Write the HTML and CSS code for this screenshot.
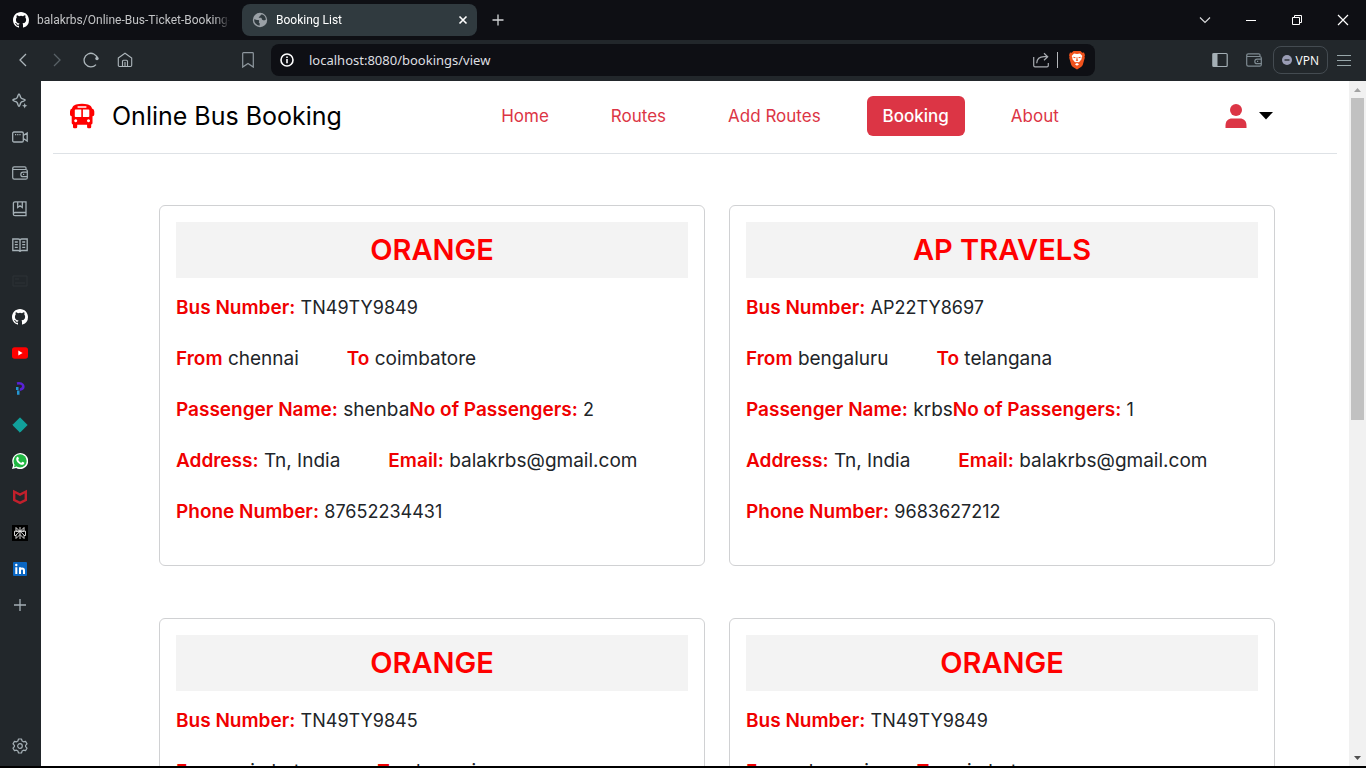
FILE: index.html
```html
<!DOCTYPE html>
<html lang="en">
<head>
<meta charset="utf-8">
<meta name="viewport" content="width=device-width, initial-scale=1">
<title>Booking List</title>
<link rel="stylesheet" href="styles.css">
</head>
<body>
<svg class="defs" aria-hidden="true">
  <symbol id="github" viewBox="0 0 16 16"><path fill="currentColor" d="M8 0C3.58 0 0 3.58 0 8c0 3.54 2.29 6.53 5.47 7.59.4.07.55-.17.55-.38 0-.19-.01-.82-.01-1.49-2.01.37-2.53-.49-2.69-.94-.09-.23-.48-.94-.82-1.13-.28-.15-.68-.52-.01-.53.63-.01 1.08.58 1.23.82.72 1.21 1.87.87 2.33.66.07-.52.28-.87.51-1.07-1.78-.2-3.64-.89-3.64-3.95 0-.87.31-1.59.82-2.15-.08-.2-.36-1.02.08-2.12 0 0 .67-.21 2.2.82a7.4 7.4 0 0 1 4 0c1.53-1.04 2.2-.82 2.2-.82.44 1.1.16 1.92.08 2.12.51.56.82 1.27.82 2.15 0 3.07-1.87 3.75-3.65 3.95.29.25.54.73.54 1.48 0 1.07-.01 1.93-.01 2.2 0 .21.15.46.55.38A8.01 8.01 0 0 0 16 8c0-4.42-3.58-8-8-8z"/></symbol>
  <symbol id="wallet" viewBox="0 0 16 16"><g fill="none" stroke="currentColor" stroke-width="1.2"><path d="M14 4.5V3.2c0-.8-.5-1.4-1.3-1.4H2.2c-.9 0-1.5.6-1.5 1.4v9.3c0 1 .6 1.7 1.6 1.7h11.4c.9 0 1.6-.6 1.6-1.5V6c0-.9-.6-1.5-1.5-1.5H2.2C1.2 4.5.7 4 .7 3.2"/><path d="M15.3 7.1h-4.2a2.3 2.3 0 0 0 0 4.6h4.2M11 9.4h1.2"/></g></symbol>
</svg>

<header class="tab-strip">
  <div class="tab">
    <svg class="icon" aria-hidden="true"><use href="#github"/></svg>
    <span class="tab-title">balakrbs/Online-Bus-Ticket-Booking-</span>
  </div>
  <div class="tab tab-active">
    <svg class="icon globe" viewBox="0 0 16 16" aria-hidden="true"><circle cx="8" cy="8" r="7.2" fill="#9aa0a6"/><path fill="#303a3f" d="M2.2 7.2c1.5.2 2.5.9 3.6.8 1.4 0 1.7 1 1.2 1.7-.5.6 0 1.1.6 1.5.5.5-.2 1.7 0 2.5A5.9 5.9 0 0 1 2.2 7.2zM9.4 2.2c.3.6-.2 1.2-.9 1.3-.6.2-.4 1-1.2 1.2-.7.2-.7.8-.2 1 .8.4 2-.2 2.5.5.4.7.2 1.6 1.1 1.7.8.1 1.2.8 1.8.4.5-.3.9-.6 1.4-.4a6 6 0 0 0-4.5-5.7z"/></svg>
    <span class="tab-title">Booking List</span>
    <button class="plain" aria-label="Close tab"><svg width="10" height="10" viewBox="0 0 10 10"><path d="M1.5 1.5l7 7m0-7l-7 7" stroke="#fff" stroke-width="1.6"/></svg></button>
  </div>
  <button class="plain new-tab" aria-label="New tab"><svg width="12" height="12" viewBox="0 0 12 12"><path d="M6 .5v11M.5 6h11" stroke="#d2d4d6" stroke-width="1.3"/></svg></button>
  <div class="window-buttons">
    <button class="plain" aria-label="Search tabs"><svg width="12" height="12" viewBox="0 0 12 12"><path d="M1 3.500l5 5 5-5" fill="none" stroke="#d8d9db" stroke-width="1.2"/></svg></button>
    <button class="plain" aria-label="Minimize"><svg width="12" height="12" viewBox="0 0 12 12"><path d="M1 6.500h10" stroke="#fff"/></svg></button>
    <button class="plain" aria-label="Restore"><svg width="12" height="12" viewBox="0 0 12 12"><path d="M1.500 3.500h7v7h-7zM3.500 3.500v-2h7v7h-2" fill="none" stroke="#fff"/></svg></button>
    <button class="plain" aria-label="Close"><svg width="12" height="12" viewBox="0 0 12 12"><path d="M1 1l10 10M11 1L1 11" stroke="#fff" stroke-width="1.2"/></svg></button>
  </div>
</header>

<div class="toolbar">
  <div class="nav-buttons">
    <button class="plain" aria-label="Back"><svg class="icon" viewBox="0 0 16 16"><path d="M11 2L5 8l6 6" fill="none" stroke="#adb6bb" stroke-width="1.3"/></svg></button>
    <button class="plain" aria-label="Forward"><svg class="icon" viewBox="0 0 16 16"><path d="M5 2l6 6-6 6" fill="none" stroke="#596167" stroke-width="1.3"/></svg></button>
    <button class="plain" aria-label="Reload"><svg class="icon" viewBox="0 0 16 16"><path d="M14.500 6.500A6.800 6.800 0 1 0 13 12.600" fill="none" stroke="#adb6bb" stroke-width="1.3"/><circle cx="14" cy="6.500" r="1.700" fill="#adb6bb"/></svg></button>
    <button class="plain" aria-label="Home"><svg class="icon" viewBox="0 0 16 16"><path d="M1.300 6L8 1.200 14.700 6v7.300c0 .7-.5 1.200-1.200 1.200h-11c-.7 0-1.200-.5-1.200-1.200zM5.500 14.500V9.200c0-.6.4-1 1-1h3c.6 0 1 .4 1 1v5.300M8 10v4" fill="none" stroke="#adb6bb" stroke-width="1.100"/></svg></button>
  </div>
  <button class="plain bookmark" aria-label="Bookmark"><svg class="icon" viewBox="0 0 16 16"><path d="M2.700 1.500c0-.5.3-.8.800-.8h9c.5 0 .8.300.8.800v13.600L8 11.400l-5.300 3.700z" fill="none" stroke="#8e979e" stroke-width="1.200"/></svg></button>
  <div class="address">
    <svg class="icon" viewBox="0 0 16 16" aria-hidden="true"><circle cx="8" cy="8" r="6" fill="none" stroke="#fff" stroke-width="1.600"/><path d="M8 7v4.200M8 4.600v1.500" stroke="#fff" stroke-width="1.600"/></svg>
    <input aria-label="Address" type="text" value="localhost:8080/bookings/view" spellcheck="false">
    <button class="plain" aria-label="Share"><svg class="icon" viewBox="0 0 16 16"><path d="M.7 5v8.500c0 .8.500 1.300 1.300 1.300h12c.8 0 1.300-.5 1.300-1.300V11M3.700 11.300c.2-4.500 3-6.600 7.500-6.600h3M11 1.200l3.700 3.500L11 8.200" fill="none" stroke="#a8abb0" stroke-width="1.200"/></svg></button>
    <span class="divider"></span>
    <button class="plain shields" aria-label="Brave Shields"><svg width="18" height="20" viewBox="0 0 18 20"><path fill="#f0521c" d="M5.500 1h7l1.800 1.700 1.700-.1 1 2.700-.5 1 .3 1.400-2 7c-.3 1-1 1.700-1.800 2.200L9 19.500l-4-2.600c-.8-.5-1.500-1.200-1.800-2.200l-2-7 .3-1.400-.5-1L2 2.600l1.700.1z"/><path fill="#fff" d="M9 4l3-.6 2.300 2.700-.8 2 .2 1-2.500 3-1 .1L9 12l-1.200.2-1-.1-2.500-3 .2-1-.8-2L6 3.400zM9 13l2.100 1.200L9 15.800l-2.100-1.600z"/><path fill="#f0521c" d="M5.200 6.700l2.500.6-.6 1-1.600-.6zM12.800 6.700l-2.500.6.6 1 1.600-.6zM8.700 7h.6l.3 2.400.7 1-1.300.7-1.300-.7.700-1z"/></svg></button>
  </div>
  <div class="tools">
    <button class="plain" aria-label="Sidebar"><svg class="icon" viewBox="0 0 16 16"><rect x=".8" y="1.500" width="14.400" height="13" rx="1" fill="none" stroke="#a4afb5" stroke-width="1.200"/><path d="M1 2h4.500v12H1z" fill="#a4afb5"/></svg></button>
    <button class="plain wallet" aria-label="Wallet"><svg class="icon"><use href="#wallet"/></svg></button>
    <button class="vpn"><svg width="10" height="10" viewBox="0 0 10 10"><circle cx="5" cy="5" r="5" fill="#9a9db5"/><path d="M2.500 5h5" stroke="#22272b" stroke-width="1.300"/></svg>VPN</button>
    <button class="plain" aria-label="Menu"><svg class="icon" viewBox="0 0 16 16"><path d="M1 3.500h14M1 8.500h14M1 13.500h14" stroke="#98a7aa" stroke-width="1.100"/></svg></button>
  </div>
</div>

<div class="workspace">
  <aside class="sidebar">
    <button class="plain" aria-label="Leo AI"><svg class="icon" viewBox="0 0 16 16"><g fill="none" stroke="currentColor" stroke-width="1.400"><path d="M7 1c.7 0 1 1.600 1.600 3.200.3.700.7 1.100 1.400 1.400 1.600.7 3.200.8 3.200 1.500s-1.600 1-3.200 1.600c-.7.300-1.100.700-1.400 1.400C8 11.700 7.700 13.300 7 13.300s-1-1.600-1.600-3.200C5.100 9.400 4.700 9 4 8.700 2.400 8.100.8 7.800.8 7.100S2.400 6.200 4 5.600c.7-.3 1.100-.7 1.400-1.400C6 2.600 6.300 1 7 1z"/></g><path fill="currentColor" d="M12.700 10l.8 1.900 1.900.8-1.900.8-.8 1.900-.8-1.900-1.900-.8 1.900-.8z"/></svg></button>
    <button class="plain" aria-label="Talk"><svg class="icon" viewBox="0 0 16 16"><path d="M2 3h8c.8 0 1.300.5 1.300 1.300v7.400c0 .8-.5 1.300-1.300 1.300H2c-.8 0-1.300-.5-1.300-1.300V4.300C.7 3.500 1.200 3 2 3zM11.300 6.500l3.900-2.600v8.200l-3.900-2.600M3 5.700h1.200m1 0h1.200m1 0h1.200" fill="none" stroke="currentColor" stroke-width="1.300"/></svg></button>
    <button class="plain" aria-label="Wallet"><svg class="icon"><use href="#wallet"/></svg></button>
    <button class="plain" aria-label="Bookmarks"><svg class="icon" viewBox="0 0 16 16"><path d="M14 11.500H3c-1 0-1.600.600-1.600 1.700 0 1 .6 1.500 1.600 1.500h11V.8H3C2 .8 1.400 1.400 1.400 2.300v11M5.700 1v5.500L8 4.800l2.300 1.700V1" fill="none" stroke="currentColor" stroke-width="1.300"/></svg></button>
    <button class="plain" aria-label="Reading list"><svg class="icon" viewBox="0 0 16 16"><path d="M.8 2h5.500C7.400 2 8 2.600 8 3.400 8 2.600 8.600 2 9.700 2h5.500v11.500H9.700c-1 0-1.700.4-1.700 1.200 0-.8-.7-1.200-1.700-1.200H.8zM8 3.400v11.500M2.800 5h3M2.800 7.700h3M2.800 10.400h3M10.200 5h3M10.200 7.700h3M10.200 10.400h3" fill="none" stroke="currentColor" stroke-width="1.300"/></svg></button>
    <button class="plain faint" aria-label="Playlist"><svg class="icon" viewBox="0 0 16 16"><path d="M1 3h14v10H1zM3 6h4M3 10h10" fill="none" stroke="currentColor"/></svg></button>
    <button class="plain white" aria-label="GitHub"><svg class="icon"><use href="#github"/></svg></button>
    <button class="plain" aria-label="YouTube"><svg class="icon" viewBox="0 0 16 16"><rect y="2.300" width="16" height="11.400" rx="2.700" fill="#f00"/><path d="M6.300 5.500v5l4.300-2.500z" fill="#fff"/></svg></button>
    <button class="plain" aria-label="Pixlr"><svg class="icon" viewBox="0 0 16 16"><path d="M5 2.500c3-.7 6 .2 6.300 2.700.2 2-1.500 3.200-3.500 3.500" fill="none" stroke="#5a22d6" stroke-width="2.600"/><path d="M4 6h2.500v3H4zM5 9.500h2.500v4.200H5z" fill="#2497d3"/></svg></button>
    <button class="plain" aria-label="Diamond"><svg class="icon" viewBox="0 0 16 16"><path d="M8 .8L15.200 8 8 15.200.8 8z" fill="#11a09b" stroke="#11a09b" stroke-linejoin="round"/></svg></button>
    <button class="plain" aria-label="WhatsApp"><svg class="icon" viewBox="0 0 16 16"><path fill="#fff" d="M0 16l1.200-4.100A8 8 0 1 1 4.200 15z"/><circle cx="8.100" cy="7.900" r="6.600" fill="#20b642"/><path d="M2 14.300l.8-3 2 2.300z" fill="#20b642"/><path fill="#fff" d="M5.200 4c.8-.4 1.100 0 1.700 1.600.1.500-.6.900-.7 1.300.8 1.500 1.800 2.400 3.200 2.900.4-.1.800-1.100 1.200-1 .5.200 1.700.8 1.700.9.200.8-.5 1.800-1.600 2-3.200.4-6.500-3.300-6.500-5.500 0-1 .5-1.800 1-2.200z"/></svg></button>
    <button class="plain" aria-label="McAfee"><svg class="icon" viewBox="0 0 16 16"><path fill="#c2202c" d="M1 .8l7 3.500 7-3.500v11L8 15.300l-7-3.500zM3.400 4.600v5.700L8 12.600l4.600-2.300V4.600L8 7z"/></svg></button>
    <button class="plain" aria-label="Perplexity"><svg class="icon" viewBox="0 0 16 16"><path d="M0 0h16v16H0z" fill="#000"/><path d="M8 2v12M4 2.500l4 4 4-4v3.700H4zM8 6.300L4 10v3.500l4-4 4 4V10L8 6.300M4 10.500H2.500V6.200h11v4.300H12" fill="none" stroke="#e6e6e6" stroke-width=".9"/></svg></button>
    <button class="plain" aria-label="LinkedIn"><svg class="icon" viewBox="0 0 16 16"><rect x="1" y="1" width="14" height="14" rx="1" fill="#0a66c2"/><path d="M4.300 6.300V13M8 13V6.300M8 9.500c0-2.700 4-2.700 4 0V13" fill="none" stroke="#fff" stroke-width="2"/><circle cx="4.300" cy="4" r="1.200" fill="#fff"/></svg></button>
    <button class="plain" aria-label="Add"><svg class="icon" viewBox="0 0 16 16"><path d="M8 2v12M2 8h12" stroke="currentColor" stroke-width="1.300"/></svg></button>
    <button class="plain settings" aria-label="Settings"><svg class="icon" viewBox="0 0 16 16"><path d="M6.500 1h3l.6 2 1.400.8 2-.5L15 5.900l-1.400 1.500v1.200L15 10.100l-1.500 2.600-2-.5-1.400.8-.6 2h-3l-.6-2-1.400-.8-2 .5L1 10.100l1.400-1.500V7.400L1 5.900l1.500-2.600 2 .5L5.900 3z" fill="none" stroke="currentColor" stroke-width="1.200" stroke-linejoin="round"/><circle cx="8" cy="8" r="2.300" fill="none" stroke="currentColor" stroke-width="1.200"/></svg></button>
  </aside>

  <main class="page">
    <nav class="site-nav">
      <a class="brand" href="#">
        <svg width="26" height="26" viewBox="0 0 26 26" aria-hidden="true"><path fill="#f00" fill-rule="evenodd" d="M7 1.500Q13 0 19 1.500Q22.500 2.500 23 5.500Q25.300 6 25.300 8.500v3q0 1.500-1.800 1.800V20q0 1.300-1.300 1.600V24q0 1.200-1.200 1.200h-1.700q-1.200 0-1.200-1.200v-2.300H8.200V24q0 1.200-1.200 1.200H5.200Q4 25.200 4 24v-2.400Q2.700 21.300 2.700 20v-6.700Q1 13 1 11.500v-3Q1 6 3 5.500Q3.500 2.500 7 1.500zM8.600 3.300v1.400h8.800V3.300zM6.500 6.500Q5.800 6.500 5.800 7.200v6q0 .8.700.8h5.800V6.500zM13.900 6.500V14h5.600q.8 0 .8-.8v-6q0-.7-.8-.7zM6.700 16.300a1.500 1.500 0 1 0 .01 0zM19.500 16.300a1.500 1.500 0 1 0 .01 0z"/></svg>
        Online Bus Booking
      </a>
      <ul class="links">
        <li><a href="#">Home</a></li>
        <li><a href="#">Routes</a></li>
        <li><a href="#">Add Routes</a></li>
        <li><a class="active" href="#" aria-current="page">Booking</a></li>
        <li><a href="#">About</a></li>
      </ul>
      <button class="plain account" aria-label="Account">
        <svg width="22" height="26" viewBox="0 0 22 26"><circle cx="11" cy="7" r="6" fill="#dc3545"/><path d="M.5 25v-2.500c0-4.500 3-7 6.500-7h8c3.500 0 6.500 2.500 6.500 7V25z" fill="#dc3545"/></svg>
        <svg width="14" height="8" viewBox="0 0 14 8"><path d="M0 0h14L7 7.500z"/></svg>
      </button>
    </nav>

    <div class="bookings">
      <article class="card">
        <h2>ORANGE</h2>
        <p><span><b>Bus Number:</b> <span class="number">TN49TY9849</span></span></p>
        <p><span><b>From</b> chennai</span><span><b>To</b> coimbatore</span></p>
        <p class="joined"><span><b>Passenger Name:</b> shenba</span><span><b>No of Passengers:</b> <span class="number">2</span></span></p>
        <p><span><b>Address:</b> Tn, India</span><span><b>Email:</b> balakrbs@gmail.com</span></p>
        <p><span><b>Phone Number:</b> <span class="number">87652234431</span></span></p>
      </article>
      <article class="card">
        <h2>AP TRAVELS</h2>
        <p><span><b>Bus Number:</b> <span class="number">AP22TY8697</span></span></p>
        <p><span><b>From</b> bengaluru</span><span><b>To</b> telangana</span></p>
        <p class="joined"><span><b>Passenger Name:</b> krbs</span><span><b>No of Passengers:</b> <span class="number">1</span></span></p>
        <p><span><b>Address:</b> Tn, India</span><span><b>Email:</b> balakrbs@gmail.com</span></p>
        <p><span><b>Phone Number:</b> <span class="number">9683627212</span></span></p>
      </article>
      <article class="card">
        <h2>ORANGE</h2>
        <p><span><b>Bus Number:</b> <span class="number">TN49TY9845</span></span></p>
        <p><span><b>From</b> coimbatore</span><span><b>To</b> chennai</span></p>
      </article>
      <article class="card">
        <h2>ORANGE</h2>
        <p><span><b>Bus Number:</b> <span class="number">TN49TY9849</span></span></p>
        <p><span><b>From</b> chennai</span><span><b>To</b> coimbatore</span></p>
      </article>
    </div>
  </main>

  <div class="scrollbar" aria-hidden="true">
    <svg width="17" height="17" viewBox="0 0 17 17"><path d="M5 11l3.500-4L12 11z" fill="#a3a3a3"/></svg>
    <div class="track"><div class="thumb"></div></div>
    <svg width="17" height="17" viewBox="0 0 17 17"><path d="M5 7l3.500 4L12 7z" fill="#505050"/></svg>
  </div>
</div>
</body>
</html>
```
FILE: styles.css
```css
* { box-sizing: border-box; }

body {
  margin: 0;
  height: 100vh;
  display: flex;
  flex-direction: column;
  overflow: hidden;
  background: #fff;
  border-bottom: 2px solid #000;
  font-family: "Open Sans", sans-serif;
}

.defs { display: none; }
.icon { width: 16px; height: 16px; flex: none; }

.plain {
  display: flex;
  align-items: center;
  justify-content: center;
  padding: 0;
  border: 0;
  background: none;
  color: inherit;
}

/* Browser tabs */
.tab-strip {
  display: flex;
  flex: none;
  align-items: center;
  height: 40px;
  padding-left: 5px;
  background: #0e0f14;
  color: #fff;
  font-family: Roboto, sans-serif;
  font-size: 12px;
}
.tab {
  display: flex;
  align-items: center;
  gap: 8px;
  width: 237px;
  height: 32px;
  padding: 0 12px 0 8px;
}
.tab-title {
  flex: 1;
  overflow: hidden;
  white-space: nowrap;
  color: #c3c4c6;
  mask-image: linear-gradient(to right, #000 92%, transparent);
}
.tab-active {
  width: 235px;
  padding: 0 9px 0 10px;
  border-radius: 8px;
  background: #303a3f;
}
.tab-active .tab-title { color: #fff; }
.new-tab { margin-left: 15px; }
.window-buttons { display: flex; margin-left: auto; }
.window-buttons .plain { width: 46px; height: 40px; }

/* Toolbar */
.toolbar {
  display: flex;
  flex: none;
  align-items: center;
  height: 41px;
  padding: 0 14px 1px 15px;
  background: #22272b;
}
.nav-buttons { display: flex; gap: 18px; }
.bookmark { margin: 0 15px 0 107px; }
.address {
  display: flex;
  flex: 1;
  align-items: center;
  gap: 8px;
  height: 32px;
  padding: 0 9px 0 8px;
  border-radius: 8px;
  background: #0e0f14;
}
.address input {
  flex: 1;
  min-width: 0;
  padding: 0 0 0 6px;
  border: 0;
  outline: 0;
  background: none;
  color: #dedfe1;
  font: 13px "Noto Sans", sans-serif;
}
.divider { width: 1px; height: 16px; background: #b5b7ba; }
.shields { margin-left: 2px; }
.tools {
  display: flex;
  align-items: center;
  gap: 8px;
  margin-left: 117px;
}
.wallet { margin: 0 3px 0 10px; color: #7f8b92; }
.vpn {
  display: flex;
  align-items: center;
  gap: 4px;
  height: 28px;
  padding: 0 8px;
  border: 1px solid #444b51;
  border-radius: 8px;
  background: none;
  color: #fff;
  font: 12px "Open Sans", sans-serif;
}

/* Window body */
.workspace { display: flex; flex: 1; min-height: 0; }
.sidebar {
  display: flex;
  flex: none;
  flex-direction: column;
  align-items: center;
  gap: 20px;
  width: 41px;
  padding: 12px 1px 12px 0;
  background: #22272b;
  color: #a5b0b6;
}
.faint { color: #2d3236; }
.white { color: #fff; }
.settings { margin-top: auto; }

.page {
  flex: 1;
  min-width: 0;
  overflow: hidden;
  padding: 0 12px;
  font-family: Inter, sans-serif;
}
.site-nav {
  display: flex;
  align-items: center;
  height: 73px;
  padding: 0 64px 2px 16px;
  border-bottom: 1px solid #dee2e6;
}
.brand {
  display: flex;
  flex: 21 1 0;
  align-items: center;
  gap: 17px;
  color: #000;
  font-size: 25px;
  text-decoration: none;
  white-space: nowrap;
}
.links {
  display: flex;
  gap: 30px;
  margin: 0;
  padding: 0;
  list-style: none;
}
.links a {
  display: block;
  padding: 8px 16px;
  border-radius: 6px;
  color: #dc3545;
  font-size: 17px;
  line-height: 24px;
  text-decoration: none;
  white-space: nowrap;
}
.links .active { background: #dc3545; color: #fff; font-weight: 500; }
.account { flex: 10 1 0; justify-content: flex-end; gap: 12px; }

.bookings {
  display: grid;
  grid-template-columns: 1fr 1fr;
  gap: 52px 24px;
  padding: 51px 62px 0 106px;
}
.card {
  padding: 16px;
  border: 1px solid #d0d1d3;
  border-radius: 6px;
}
.card h2 {
  margin: 0 0 16px;
  background: #f3f3f3;
  color: #f00;
  font-size: 29px;
  font-weight: 600;
  line-height: 56px;
  text-align: center;
}
.card p {
  display: flex;
  gap: 48px;
  margin: 0 0 24px;
  color: #212529;
  font-size: 19px;
  line-height: 27px;
  white-space: nowrap;
}
.card .joined { gap: 0; }
.card b { color: #f00000; font-weight: 600; }
.number { font-size: 18px; }

/* Page scrollbar */
.scrollbar {
  display: flex;
  flex: none;
  flex-direction: column;
  width: 17px;
  background: #f1f1f1;
}
.track { flex: 1; padding: 0 2px; }
.thumb { height: 49.5%; background: #c1c1c1; }
```
